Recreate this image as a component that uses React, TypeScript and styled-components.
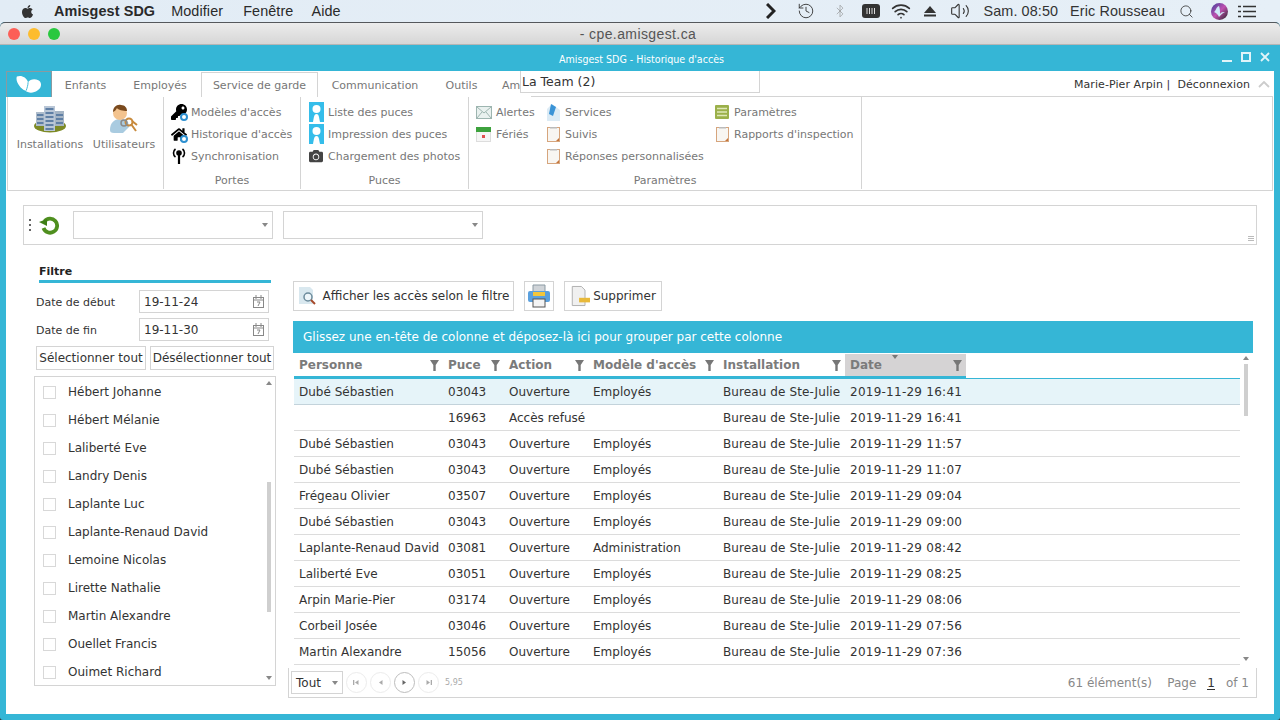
import { ReactNode } from "react";
import styled, { createGlobalStyle } from "styled-components";
import { Bluetooth, History, Search, Volume2, Wifi } from "lucide-react";
import { FaApple, FaCamera, FaHome, FaKey } from "react-icons/fa";

const CYAN = "#35b6d6";
const LINE = "#d4d4d4";
const UI_FONT = `"DejaVu Sans", Verdana, sans-serif`;

const GlobalStyle = createGlobalStyle`
  html, body { margin: 0; padding: 0; background: #fff; }
  * { box-sizing: border-box; }
`;

const Page = styled.div`
  width: 1280px;
  height: 720px;
  overflow: hidden;
  display: flex;
  flex-direction: column;
  background: linear-gradient(#e3edf6 0 50%, #333 50%);
  font-family: ${UI_FONT};
  font-size: 12px;
  color: #333;
`;

/* mac menu bar */
const MenuBar = styled.div`
  height: 22px;
  flex: none;
  display: flex;
  align-items: center;
  padding: 0 23px 0 20px;
  background: linear-gradient(90deg, #e2ecf5, #e6eff7);
  font-family: "Liberation Sans", Arial, sans-serif;
  font-size: 14.4px;
  letter-spacing: 0.1px;
  color: #2a2a2a;
`;

const MenuItem = styled.span<{ $bold?: boolean; $left?: number }>`
  margin-left: ${(p) => p.$left ?? 18}px;
  font-weight: ${(p) => (p.$bold ? 700 : 400)};
  white-space: nowrap;
`;

const MenuRight = styled.div`
  margin-left: auto;
  display: flex;
  align-items: center;
  color: #333;
`;

const MenuIcon = styled.span<{ $w: number; $left?: number }>`
  width: ${(p) => p.$w}px;
  margin-left: ${(p) => p.$left ?? 0}px;
  display: flex;
  justify-content: center;
  align-items: center;
`;

const Window = styled.div`
  flex: 1;
  min-height: 0;
  display: flex;
  flex-direction: column;
  background: ${CYAN};
  border-radius: 5px 5px 3px 3px;
`;

const Chrome = styled.div`
  height: 23px;
  flex: none;
  position: relative;
  display: flex;
  align-items: center;
  justify-content: center;
  padding-right: 4px;
  border-top: 1px solid #55585c;
  border-bottom: 1px solid #b5b5b5;
  border-radius: 5px 5px 0 0;
  background: linear-gradient(#ececec, #d6d6d6);
  font-family: "Liberation Sans", Arial, sans-serif;
  font-size: 14px;
  letter-spacing: 0.4px;
  color: #555;
`;

const Lights = styled.div`
  position: absolute;
  left: 8px;
  top: 5px;
  display: flex;
  gap: 8px;
`;

const Light = styled.span<{ $c: string }>`
  width: 12px;
  height: 12px;
  border-radius: 50%;
  background: ${(p) => p.$c};
`;

const TitleBar = styled.div`
  height: 26px;
  flex: none;
  position: relative;
  display: flex;
  align-items: center;
  justify-content: center;
  color: #fff;
  font-family: "DejaVu Sans Condensed", "DejaVu Sans", sans-serif;
  font-size: 10.6px;
  padding: 2px 0 0 3px;
  white-space: pre;
`;

const WinButtons = styled.div`
  position: absolute;
  right: 10px;
  top: 7px;
  display: flex;
  gap: 9px;
`;

const Body = styled.div`
  flex: 1;
  min-height: 0;
  margin: 0 6px 6px 6px;
  background: #fff;
  position: relative;
  display: flex;
  flex-direction: column;
`;

/* tabs */
const TabStrip = styled.div`
  height: 26px;
  flex: none;
  display: flex;
  align-items: flex-end;
  position: relative;
  z-index: 1;
  margin-bottom: -1px;
`;

const LogoTab = styled.div`
  width: 46px;
  height: 26px;
  background: ${CYAN};
  border: 1px solid #8a9aa0;
  border-bottom: none;
  display: flex;
  align-items: center;
  justify-content: center;
`;

const Tab = styled.div<{ $active?: boolean; $w: number }>`
  width: ${(p) => p.$w}px;
  height: 25px;
  display: flex;
  align-items: center;
  justify-content: center;
  font-size: 11px;
  color: #777;
  white-space: nowrap;
  background: #fff;
  border: 1px solid ${(p) => (p.$active ? LINE : "transparent")};
  border-bottom: none;
`;

const UserBox = styled.div`
  margin-left: auto;
  height: 25px;
  display: flex;
  align-items: center;
  gap: 8px;
  padding-right: 4px;
  font-size: 11px;
  letter-spacing: 0.07px;
  color: #333;
  white-space: pre;
`;

const TeamPopup = styled.div`
  position: absolute;
  left: 514px;
  top: 0;
  width: 240px;
  height: 22px;
  z-index: 2;
  background: #fff;
  border: 1px solid ${LINE};
  border-top: none;
  padding: 3px 0 0 1px;
  font-size: 12.5px;
  color: #333;
`;

/* ribbon */
const Ribbon = styled.div`
  height: 95px;
  flex: none;
  margin: 0 1px;
  display: flex;
  border: 1px solid ${LINE};
`;

const Group = styled.div<{ $w: number }>`
  width: ${(p) => p.$w}px;
  flex: none;
  display: flex;
  flex-direction: column;
  border-right: 1px solid ${LINE};
  margin-bottom: 1px;
`;

const GroupBody = styled.div`
  flex: 1;
  display: flex;
  padding: 4px 0 0 7px;
`;

const GroupName = styled.div`
  height: 15px;
  text-align: center;
  font-size: 11px;
  color: #777;
`;

const BigButton = styled.div<{ $w: number }>`
  width: ${(p) => p.$w}px;
  display: flex;
  flex-direction: column;
  align-items: center;
  gap: 3px;
  padding-top: 2px;
  font-size: 11px;
  color: #777;
`;

const BigIcon = styled.span`
  height: 32px;
  display: flex;
  align-items: center;
  justify-content: center;
`;

const Col = styled.div<{ $w?: number }>`
  width: ${(p) => (p.$w ? `${p.$w}px` : "auto")};
  flex: none;
  display: flex;
  flex-direction: column;
`;

const RibbonItem = styled.div<{ $gap?: number }>`
  height: 22px;
  display: flex;
  align-items: center;
  gap: ${(p) => p.$gap ?? 4}px;
  font-size: 11px;
  color: #777;
  white-space: nowrap;
`;

const IconSlot = styled.span<{ $w?: number; $left?: number }>`
  width: ${(p) => p.$w ?? 16}px;
  height: 18px;
  flex: none;
  margin-left: ${(p) => p.$left ?? 0}px;
  position: relative;
  display: flex;
  align-items: center;
  justify-content: center;
  color: #000;
`;

const BadgeDot = styled.span`
  position: absolute;
  right: -1px;
  bottom: 0;
  width: 8px;
  height: 8px;
  border-radius: 50%;
  background: #fff;
  border: 2px solid #2c8fd0;
`;

/* toolbar with two selects */
const Toolbar = styled.div`
  height: 40px;
  flex: none;
  margin: 14px 17px 0 17px;
  border: 1px solid ${LINE};
  display: flex;
  align-items: center;
  padding-left: 5px;
  position: relative;
`;

const Grip = styled.div`
  width: 2px;
  height: 12px;
  background: repeating-linear-gradient(#666 0 2px, transparent 2px 5px);
`;

const Select = styled.div<{ $w: number; $left: number }>`
  width: ${(p) => p.$w}px;
  height: 28px;
  margin-left: ${(p) => p.$left}px;
  border: 1px solid ${LINE};
  display: flex;
  align-items: center;
  justify-content: flex-end;
  padding-right: 4px;
`;

const Caret = styled.span<{ $up?: boolean; $c?: string }>`
  width: 0;
  height: 0;
  border-left: 3.5px solid transparent;
  border-right: 3.5px solid transparent;
  ${(p) =>
    p.$up
      ? `border-bottom: 4px solid ${p.$c ?? "#888"};`
      : `border-top: 4px solid ${p.$c ?? "#888"};`}
`;

const ResizeMark = styled.span`
  position: absolute;
  right: 2px;
  bottom: 2px;
  width: 6px;
  height: 6px;
  background: repeating-linear-gradient(#bbb 0 1px, transparent 1px 2px);
`;

/* main area */
const Main = styled.div`
  flex: 1;
  min-height: 0;
  display: flex;
  padding: 0 17px 17px 28px;
`;

const Side = styled.div`
  width: 242px;
  flex: none;
  display: flex;
  flex-direction: column;
`;

const FilterHead = styled.div`
  margin: 20px 5px 0 5px;
  height: 18px;
  border-bottom: 3px solid ${CYAN};
  font-size: 11px;
  font-weight: 700;
  color: #222;
  padding-bottom: 2px;
`;

const DateRow = styled.div`
  height: 23px;
  margin: 7px 0 -2px 2px;
  display: flex;
  align-items: center;
  font-size: 11px;
  color: #333;
`;

const DateLabel = styled.span`
  width: 103px;
  padding-top: 1px;
`;

const DateInput = styled.div`
  width: 130px;
  height: 23px;
  border: 1px solid ${LINE};
  padding: 0 4px;
  display: flex;
  align-items: center;
  justify-content: space-between;
  font-size: 12px;
`;

const SelectRow = styled.div`
  display: flex;
  gap: 4px;
  margin: 7px 0 6px 2px;
`;

const FlatButton = styled.div<{ $w: number }>`
  width: ${(p) => p.$w}px;
  height: 24px;
  border: 1px solid ${LINE};
  display: flex;
  align-items: center;
  justify-content: center;
  font-size: 12px;
  color: #333;
  white-space: nowrap;
`;

const ListBox = styled.div`
  height: 310px;
  border: 1px solid ${LINE};
  display: flex;
  position: relative;
  overflow: hidden;
`;

const ListItems = styled.div`
  flex: 1;
  padding-top: 1px;
`;

const ListItem = styled.div`
  height: 28px;
  display: flex;
  align-items: center;
  gap: 12px;
  padding-left: 8px;
  font-size: 12px;
  color: #333;
`;

const Check = styled.span`
  width: 13px;
  height: 13px;
  margin-top: 1px;
  border: 1px solid #d8d8d8;
`;

const ListThumb = styled.span`
  position: absolute;
  right: 4px;
  top: 105px;
  width: 4px;
  height: 130px;
  background: #cfcfcf;
`;

const ArrowTop = styled.span<{ $right?: number; $top?: number }>`
  position: absolute;
  right: ${(p) => p.$right ?? 3}px;
  top: ${(p) => p.$top ?? 4}px;
  display: flex;
`;

const ArrowBottom = styled.span<{ $right?: number; $bottom?: number }>`
  position: absolute;
  right: ${(p) => p.$right ?? 3}px;
  bottom: ${(p) => p.$bottom ?? 5}px;
  display: flex;
`;

const Content = styled.div`
  flex: 1;
  min-width: 0;
  margin-left: 12px;
  display: flex;
  flex-direction: column;
`;

const Actions = styled.div`
  display: flex;
  margin: 36px 0 10px 5px;
`;

const ActionButton = styled.div<{ $w: number; $left?: number; $gap?: number }>`
  width: ${(p) => p.$w}px;
  height: 30px;
  margin-left: ${(p) => p.$left ?? 0}px;
  border: 1px solid ${LINE};
  display: flex;
  align-items: center;
  justify-content: center;
  gap: ${(p) => p.$gap ?? 3}px;
  font-size: 12px;
  color: #333;
  white-space: nowrap;
`;

const GroupBar = styled.div`
  height: 32px;
  margin: 0 4px 0 5px;
  flex: none;
  background: ${CYAN};
  color: #fff;
  font-size: 12px;
  padding-left: 10px;
  display: flex;
  align-items: center;
`;

const GridWrap = styled.div`
  height: 315px;
  flex: none;
  margin: 0 4px 0 6px;
  display: flex;
  position: relative;
  overflow: hidden;
`;

const GridInner = styled.div`
  width: 946px;
  flex: none;
`;

const HeaderRow = styled.div`
  height: 26px;
  width: 672px;
  padding-top: 1px;
  display: grid;
  grid-template-columns: 149px 61px 84px 130px 127px 121px;
  border-bottom: 3px solid ${CYAN};
`;

const HeaderLine = styled.div`
  height: 1px;
  margin-top: -1px;
  background: ${CYAN};
`;

const HeadCell = styled.div<{ $sorted?: boolean }>`
  height: 22px;
  position: relative;
  display: flex;
  align-items: center;
  justify-content: space-between;
  padding: 0 4px 0 5px;
  font-size: 12px;
  font-weight: 700;
  color: #7b7b7b;
  white-space: nowrap;
  background: ${(p) => (p.$sorted ? "#d5d3d4" : "transparent")};
`;

const SortMark = styled.span`
  position: absolute;
  left: 47px;
  top: 1px;
  display: flex;
`;

const Row = styled.div<{ $selected?: boolean }>`
  height: 26px;
  display: grid;
  grid-template-columns: 149px 61px 84px 130px 127px 121px;
  align-items: center;
  border-bottom: 1px solid ${(p) => (p.$selected ? "#c3d3db" : "#dcdcdc")};
  background: ${(p) => (p.$selected ? "#e6f4f9" : "#fff")};
  font-size: 12px;
  color: #333;
`;

const Cell = styled.div<{ $spacing?: number }>`
  padding-left: 5px;
  white-space: nowrap;
  overflow: hidden;
  letter-spacing: ${(p) => p.$spacing ?? 0}px;
`;

const GridThumb = styled.span`
  position: absolute;
  right: 5px;
  top: 11px;
  width: 4px;
  height: 52px;
  background: #cfcfcf;
`;

const Pager = styled.div`
  height: 30px;
  flex: none;
  display: flex;
  align-items: center;
  padding: 0 7px 0 2px;
  border: 1px solid ${LINE};
  border-top: none;
`;

const PageSize = styled.div`
  width: 52px;
  height: 23px;
  border: 1px solid ${LINE};
  display: flex;
  align-items: center;
  justify-content: space-between;
  padding: 0 4px;
  font-size: 12px;
`;

const Round = styled.span<{ $strong?: boolean }>`
  width: 21px;
  height: 21px;
  margin-left: 3px;
  border-radius: 50%;
  border: 1px solid ${(p) => (p.$strong ? "#bdbdbd" : "#ececec")};
  display: flex;
  align-items: center;
  justify-content: center;
  color: ${(p) => (p.$strong ? "#666" : "#aaa")};
`;

const Tiny = styled.span`
  margin-left: 6px;
  font-size: 8px;
  color: #aaa;
`;

const PagerInfo = styled.div`
  margin-left: auto;
  display: flex;
  align-items: center;
  font-size: 12px;
  color: #888;
  white-space: pre;
`;

const PageNum = styled.span`
  color: #333;
  border-bottom: 1px solid #333;
  line-height: 12px;
  margin: 2px 11px 0 11px;
`;

const Logo = () => (
  <svg width="28" height="20" viewBox="0 0 30 20">
    <path
      d="M2 1c4-2 10 0 12 6 2-3 7-4 11-2 4 2 4 8-1 11-4 3-10 3-13 0C6 14 0 6 2 1z"
      fill="#fff"
    />
    <path d="M14 7c0 3-1 6-2 9" stroke={CYAN} strokeWidth="1" fill="none" />
  </svg>
);

const BuildingIcon = () => (
  <svg width="34" height="28" viewBox="0 0 34 28">
    <ellipse cx="17" cy="21" rx="16" ry="6.500" fill="#7d8a26" />
    <rect x="3" y="7" width="9" height="14" fill="#aebccb" />
    <rect x="11" y="1" width="11" height="25" fill="#b9c6d6" />
    <rect x="22" y="6" width="9" height="15" fill="#a5b4c4" />
    {[3, 7, 11, 15, 19, 23].map((y) => (
      <rect key={y} x="12.500" y={y} width="8" height="2" fill="#5f7fa5" />
    ))}
    {[9, 13, 17].map((y) => (
      <g key={y}>
        <rect x="4" y={y} width="6.500" height="2" fill="#5f7fa5" />
        <rect x="23" y={y} width="7" height="2" fill="#5f7fa5" />
      </g>
    ))}
  </svg>
);

const UserIcon = () => (
  <svg width="32" height="30" viewBox="0 0 32 30">
    <path d="M2 26c0-7 4-11 10-11s9 3 9 8l-6 6H6c-3 0-4-1-4-3z" fill="#a9cbe0" />
    <circle cx="12" cy="9" r="7" fill="#f3c38e" />
    <path d="M5 8c0-5 4-8 8-7 4 0 6 3 6 6-4 0-9-1-10-3-1 2-2 3-4 4z" fill="#7a4a1e" />
    <circle cx="21" cy="18" r="3.500" fill="none" stroke="#c88a3c" strokeWidth="2" />
    <path d="M23 20l5 7M24 17l5 4" stroke="#c88a3c" strokeWidth="2" />
    <circle cx="16" cy="19" r="3" fill="none" stroke="#8a8a8a" strokeWidth="1.500" />
  </svg>
);

const AntennaIcon = () => (
  <svg width="16" height="18" viewBox="0 0 16 18" fill="none" stroke="#000" strokeWidth="1.600">
    <circle cx="8" cy="6" r="2" fill="#000" />
    <path d="M8 7v10" strokeWidth="2.200" />
    <path d="M4.500 10a5 5 0 0 1 0-8M11.500 10a5 5 0 0 0 0-8" />
  </svg>
);

const BadgeIcon = () => (
  <svg width="15" height="20" viewBox="0 0 15 20">
    <rect width="15" height="20" fill="#35bdea" />
    <circle cx="7.500" cy="7" r="4" fill="#fff" />
    <path d="M4 20c1-5 1-8 3.500-8s2.500 3 3.500 8z" fill="#fff" />
  </svg>
);

const MailIcon = () => (
  <svg width="16" height="13" viewBox="0 0 16 13">
    <rect x=".5" y=".5" width="15" height="12" fill="#e9f1ef" stroke="#9db5b0" />
    <path d="M1 1l7 6 7-6M1 12l5-6M15 12l-5-6" fill="none" stroke="#9db5b0" />
  </svg>
);

const CalendarIcon = () => (
  <svg width="16" height="16" viewBox="0 0 16 16">
    <rect x=".5" y="3" width="14" height="12.500" fill="#f6f6f6" stroke="#ddd" />
    <rect y="1" width="15" height="5" fill="#3da23d" />
    <rect x="6" y="9" width="3" height="3" fill="#e05050" />
  </svg>
);

const ServiceIcon = () => (
  <svg width="13" height="17" viewBox="0 0 13 17">
    <path d="M0 5l5-5 8 6v11H0z" fill="#dcebf5" />
    <path d="M4 0l5 3-3 9-4-2z" fill="#3a93d6" />
  </svg>
);

const ClipIcon = () => (
  <svg width="13" height="15" viewBox="0 0 13 15">
    <rect x=".5" y=".5" width="12" height="14" fill="#f8f6f2" stroke="#d6a57d" />
    <path d="M9 14l3-3v3z" fill="#c5763c" />
    <rect x="3" width="7" height="1.500" fill="#bbb" />
  </svg>
);

const ListIcon = () => (
  <svg width="14" height="14" viewBox="0 0 14 14">
    <rect width="14" height="14" rx="1" fill="#9bb04a" />
    <path d="M2 3.500h10M2 7h10M2 10.500h10" stroke="#dfe8b8" strokeWidth="1.500" />
  </svg>
);

const RefreshIcon = () => (
  <svg width="20" height="20" viewBox="0 0 20 20" fill="none">
    <path d="M5.500 6.500a7 7 0 1 1-1 6.500" stroke="#4f8f1f" strokeWidth="3.800" />
    <path d="M0 7l8-3v7z" fill="#3f7f17" />
  </svg>
);

const MiniCalendar = () => (
  <svg width="11" height="13" viewBox="0 0 11 13" fill="none" stroke="#888">
    <rect x=".5" y="2.500" width="10" height="10" />
    <path d="M3 0v4M8 0v4M1 5h9" />
    <path d="M4 7h3l-2 4" />
  </svg>
);

const FunnelIcon = () => (
  <svg width="9" height="11" viewBox="0 0 9 11">
    <path d="M0 0h9L5.700 5v6H3.300V5z" fill="#777" />
  </svg>
);

const PreviewIcon = () => (
  <svg width="20" height="20" viewBox="0 0 20 20">
    <path d="M1 1h11l3 3v14H1z" fill="#d9e8ef" />
    <circle cx="10" cy="11" r="4" fill="#eef6fa" stroke="#6c8b9c" strokeWidth="1.500" />
    <path d="M13 14l4 4" stroke="#a5492a" strokeWidth="2" />
  </svg>
);

const PrintIcon = () => (
  <svg width="24" height="24" viewBox="0 0 24 24">
    <path d="M6 1h12v7H6z" fill="#d0d4d8" stroke="#8b9aa3" />
    <rect x="1" y="7" width="22" height="11" rx="2" fill="#5aa0de" />
    <rect x="6" y="8" width="12" height="4" fill="#f3c63c" />
    <rect x="6" y="15" width="12" height="8" fill="#f4f4f4" stroke="#555" />
  </svg>
);

const PageMinusIcon = () => (
  <svg width="20" height="24" viewBox="0 0 22 24">
    <path d="M2.500 1.500h10l4 4v17h-14z" fill="#f0f0f0" stroke="#aaa" />
    <rect x="10" y="14" width="12" height="5" fill="#e8b93a" />
  </svg>
);

const PagerGlyph = ({ dir, end }: { dir: "left" | "right"; end?: boolean }) => (
  <svg width="7" height="7" viewBox="0 0 7 7" fill="currentColor">
    {dir === "left" ? <path d="M5.500 1v5L2 3.500z" /> : <path d="M1.500 1v5L5 3.500z" />}
    {end && (dir === "left" ? <rect x="0" y="1" width="1.300" height="5" /> : <rect x="5.700" y="1" width="1.300" height="5" />)}
  </svg>
);

const Wrapper = ({ w, children }: { w: number; children: ReactNode }) => (
  <MenuIcon $w={w}>{children}</MenuIcon>
);

const groups = {
  portes: [
    { icon: <FaKey size={16} />, badge: true, label: "Modèles d'accès" },
    { icon: <FaHome size={17} />, badge: true, label: "Historique d'accès" },
    { icon: <AntennaIcon />, badge: false, label: "Synchronisation" },
  ],
  puces: [
    { icon: <BadgeIcon />, label: "Liste des puces" },
    { icon: <BadgeIcon />, label: "Impression des puces" },
    { icon: <FaCamera size={14} color="#444" />, label: "Chargement des photos" },
  ],
};

const names = [
  "Hébert Johanne",
  "Hébert Mélanie",
  "Laliberté Eve",
  "Landry Denis",
  "Laplante Luc",
  "Laplante-Renaud David",
  "Lemoine Nicolas",
  "Lirette Nathalie",
  "Martin Alexandre",
  "Ouellet Francis",
  "Ouimet Richard",
];

const columns = ["Personne", "Puce", "Action", "Modèle d'accès", "Installation", "Date"];

const rows = [
  ["Dubé Sébastien", "03043", "Ouverture", "Employés", "16:41"],
  ["", "16963", "Accès refusé", "", "16:41"],
  ["Dubé Sébastien", "03043", "Ouverture", "Employés", "11:57"],
  ["Dubé Sébastien", "03043", "Ouverture", "Employés", "11:07"],
  ["Frégeau Olivier", "03507", "Ouverture", "Employés", "09:04"],
  ["Dubé Sébastien", "03043", "Ouverture", "Employés", "09:00"],
  ["Laplante-Renaud David", "03081", "Ouverture", "Administration", "08:42"],
  ["Laliberté Eve", "03051", "Ouverture", "Employés", "08:25"],
  ["Arpin Marie-Pier", "03174", "Ouverture", "Employés", "08:06"],
  ["Corbeil Josée", "03046", "Ouverture", "Employés", "07:56"],
  ["Martin Alexandre", "15056", "Ouverture", "Employés", "07:36"],
];

export default function App() {
  return (
    <Page>
      <GlobalStyle />
      <MenuBar>
        <FaApple size={15} color="#333" />
        <MenuItem $bold $left={19}>Amisgest SDG</MenuItem>
        <MenuItem $left={16}>Modifier</MenuItem>
        <MenuItem $left={20}>Fenêtre</MenuItem>
        <MenuItem>Aide</MenuItem>
        <MenuRight>
          <Wrapper w={34}>
            <svg width="10" height="16" viewBox="0 0 10 16">
              <path d="M1 1l7 7-7 7" fill="none" stroke="#222" strokeWidth="3" />
            </svg>
          </Wrapper>
          <Wrapper w={36}><History size={18} strokeWidth={1.2} /></Wrapper>
          <Wrapper w={32}><Bluetooth size={14} strokeWidth={1} color="#888" /></Wrapper>
          <Wrapper w={30}>
            <svg width="18" height="14" viewBox="0 0 18 14">
              <rect width="18" height="14" rx="3" fill="#333" />
              <path d="M5 4v6M7.500 4v6M10 4v6M12.500 4v6" stroke="#ddd" />
            </svg>
          </Wrapper>
          <Wrapper w={30}><Wifi size={20} strokeWidth={2} /></Wrapper>
          <Wrapper w={28}>
            <svg width="12" height="11" viewBox="0 0 12 11">
              <path d="M6 0l6 7H0z" fill="#333" />
              <rect y="8.500" width="12" height="2" fill="#333" />
            </svg>
          </Wrapper>
          <Wrapper w={32}><Volume2 size={20} strokeWidth={1.300} /></Wrapper>
          <MenuItem $left={8}>Sam. 08:50</MenuItem>
          <MenuItem $left={12}>Eric Rousseau</MenuItem>
          <MenuIcon $w={30} $left={6}><Search size={15} strokeWidth={1.300} /></MenuIcon>
          <Wrapper w={36}>
            <svg width="17" height="17" viewBox="0 0 17 17">
              <defs>
                <linearGradient id="siri" x1="0" y1="0" x2="1" y2="1">
                  <stop offset="0" stopColor="#3a3f9c" />
                  <stop offset=".5" stopColor="#c050b0" />
                  <stop offset="1" stopColor="#222" />
                </linearGradient>
              </defs>
              <circle cx="8.500" cy="8.500" r="8.500" fill="url(#siri)" />
              <path d="M3 9c2-1 2-5 5-6 1 3 1 5 1 8 1-2 3-2 5-2-3 1-4 3-6 5-1-2-2-4-5-5z" fill="#cfe9f7" />
            </svg>
          </Wrapper>
          <Wrapper w={20}>
            <svg width="18" height="13" viewBox="0 0 18 13">
              <path d="M5 1.500h13M5 6.500h13M5 11.500h13M0 1.500h3M0 6.500h3M0 11.500h3" stroke="#333" strokeWidth="1.600" />
            </svg>
          </Wrapper>
        </MenuRight>
      </MenuBar>

      <Window>
        <Chrome>
          <Lights>
            <Light $c="#fc5f57" />
            <Light $c="#fdbc2e" />
            <Light $c="#29c83f" />
          </Lights>
          - cpe.amisgest.ca
        </Chrome>

        <TitleBar>
          Amisgest SDG - Historique d'accès
          <WinButtons>
            <svg width="10" height="10" viewBox="0 0 10 10">
              <path d="M0 9h10" stroke="#fff" strokeWidth="2" opacity=".85" />
            </svg>
            <svg width="10" height="10" viewBox="0 0 10 10">
              <rect x="1" y="1" width="8" height="8" fill="none" stroke="#fff" strokeWidth="2" opacity=".85" />
            </svg>
            <svg width="10" height="10" viewBox="0 0 10 10">
              <path d="M1 1l8 8M9 1l-8 8" stroke="#fff" strokeWidth="1.800" opacity=".85" />
            </svg>
          </WinButtons>
        </TitleBar>

        <Body>
          <TabStrip>
            <LogoTab><Logo /></LogoTab>
            <Tab $w={67}>Enfants</Tab>
            <Tab $w={82}>Employés</Tab>
            <Tab $w={117} $active>Service de garde</Tab>
            <Tab $w={114}>Communication</Tab>
            <Tab $w={59}>Outils</Tab>
            <Tab $w={40}>Am</Tab>
            <UserBox>
              Marie-Pier Arpin |  Déconnexion
              <svg width="12" height="8" viewBox="0 0 12 8">
                <path d="M1 6l5-5 5 5" fill="none" stroke="#ccc" strokeWidth="1.800" />
              </svg>
            </UserBox>
          </TabStrip>
          <TeamPopup>La Team (2)</TeamPopup>

          <Ribbon>
            <Group $w={156}>
              <GroupBody>
                <BigButton $w={70}><BigIcon><BuildingIcon /></BigIcon>Installations</BigButton>
                <BigButton $w={78}><BigIcon><UserIcon /></BigIcon>Utilisateurs</BigButton>
              </GroupBody>
            </Group>
            <Group $w={137}>
              <GroupBody>
                <Col>
                  {groups.portes.map((item) => (
                    <RibbonItem key={item.label} $gap={4}>
                      <IconSlot>
                        {item.icon}
                        {item.badge && <BadgeDot />}
                      </IconSlot>
                      {item.label}
                    </RibbonItem>
                  ))}
                </Col>
              </GroupBody>
              <GroupName>Portes</GroupName>
            </Group>
            <Group $w={168}>
              <GroupBody>
                <Col>
                  {groups.puces.map((item) => (
                    <RibbonItem key={item.label} $gap={4}>
                      <IconSlot>{item.icon}</IconSlot>
                      {item.label}
                    </RibbonItem>
                  ))}
                </Col>
              </GroupBody>
              <GroupName>Puces</GroupName>
            </Group>
            <Group $w={393}>
              <GroupBody>
                <Col $w={71}>
                  <RibbonItem><IconSlot><MailIcon /></IconSlot>Alertes</RibbonItem>
                  <RibbonItem><IconSlot><CalendarIcon /></IconSlot>Fériés</RibbonItem>
                </Col>
                <Col $w={168}>
                  <RibbonItem $gap={5}><IconSlot $w={13}><ServiceIcon /></IconSlot>Services</RibbonItem>
                  <RibbonItem $gap={5}><IconSlot $w={13}><ClipIcon /></IconSlot>Suivis</RibbonItem>
                  <RibbonItem $gap={5}><IconSlot $w={13}><ClipIcon /></IconSlot>Réponses personnalisées</RibbonItem>
                </Col>
                <Col>
                  <RibbonItem $gap={5}><IconSlot $w={14}><ListIcon /></IconSlot>Paramètres</RibbonItem>
                  <RibbonItem $gap={5}><IconSlot $w={14}><ClipIcon /></IconSlot>Rapports d'inspection</RibbonItem>
                </Col>
              </GroupBody>
              <GroupName>Paramètres</GroupName>
            </Group>
          </Ribbon>

          <Toolbar>
            <Grip />
            <IconSlot $w={20} $left={8}><RefreshIcon /></IconSlot>
            <Select $w={200} $left={14}><Caret /></Select>
            <Select $w={200} $left={10}><Caret /></Select>
            <ResizeMark />
          </Toolbar>

          <Main>
            <Side>
              <FilterHead>Filtre</FilterHead>
              <DateRow>
                <DateLabel>Date de début</DateLabel>
                <DateInput>19-11-24<MiniCalendar /></DateInput>
              </DateRow>
              <DateRow>
                <DateLabel>Date de fin</DateLabel>
                <DateInput>19-11-30<MiniCalendar /></DateInput>
              </DateRow>
              <SelectRow>
                <FlatButton $w={110}>Sélectionner tout</FlatButton>
                <FlatButton $w={124}>Désélectionner tout</FlatButton>
              </SelectRow>
              <ListBox>
                <ListItems>
                  {names.map((name) => (
                    <ListItem key={name}>
                      <Check />
                      {name}
                    </ListItem>
                  ))}
                </ListItems>
                <ArrowTop><Caret $up /></ArrowTop>
                <ListThumb />
                <ArrowBottom><Caret /></ArrowBottom>
              </ListBox>
            </Side>

            <Content>
              <Actions>
                <ActionButton $w={221} $gap={5}><PreviewIcon />Afficher les accès selon le filtre</ActionButton>
                <ActionButton $w={30} $left={10}><PrintIcon /></ActionButton>
                <ActionButton $w={98} $left={10} $gap={3}><PageMinusIcon />Supprimer</ActionButton>
              </Actions>
              <GroupBar>Glissez une en-tête de colonne et déposez-là ici pour grouper par cette colonne</GroupBar>
              <GridWrap>
                <GridInner>
                  <HeaderRow>
                    {columns.map((col) => (
                      <HeadCell key={col} $sorted={col === "Date"}>
                        {col}
                        {col === "Date" && <SortMark><Caret $c="#777" /></SortMark>}
                        <FunnelIcon />
                      </HeadCell>
                    ))}
                  </HeaderRow>
                  <HeaderLine />
                  {rows.map((r, i) => (
                    <Row key={i} $selected={i === 0}>
                      <Cell>{r[0]}</Cell>
                      <Cell>{r[1]}</Cell>
                      <Cell>{r[2]}</Cell>
                      <Cell>{r[3]}</Cell>
                      <Cell $spacing={0.1}>Bureau de Ste-Julie</Cell>
                      <Cell $spacing={0.25}>2019-11-29 {r[4]}</Cell>
                    </Row>
                  ))}
                </GridInner>
                <ArrowTop $right={4} $top={3}><Caret $up /></ArrowTop>
                <GridThumb />
                <ArrowBottom $right={4} $bottom={7}><Caret /></ArrowBottom>
              </GridWrap>
              <Pager>
                <PageSize>Tout<Caret /></PageSize>
                <Round><PagerGlyph dir="left" end /></Round>
                <Round><PagerGlyph dir="left" /></Round>
                <Round $strong><PagerGlyph dir="right" /></Round>
                <Round><PagerGlyph dir="right" end /></Round>
                <Tiny>5,95</Tiny>
                <PagerInfo>
                  61 élément(s)    Page
                  <PageNum>1</PageNum>
                  of 1
                </PagerInfo>
              </Pager>
            </Content>
          </Main>
        </Body>
      </Window>
    </Page>
  );
}
